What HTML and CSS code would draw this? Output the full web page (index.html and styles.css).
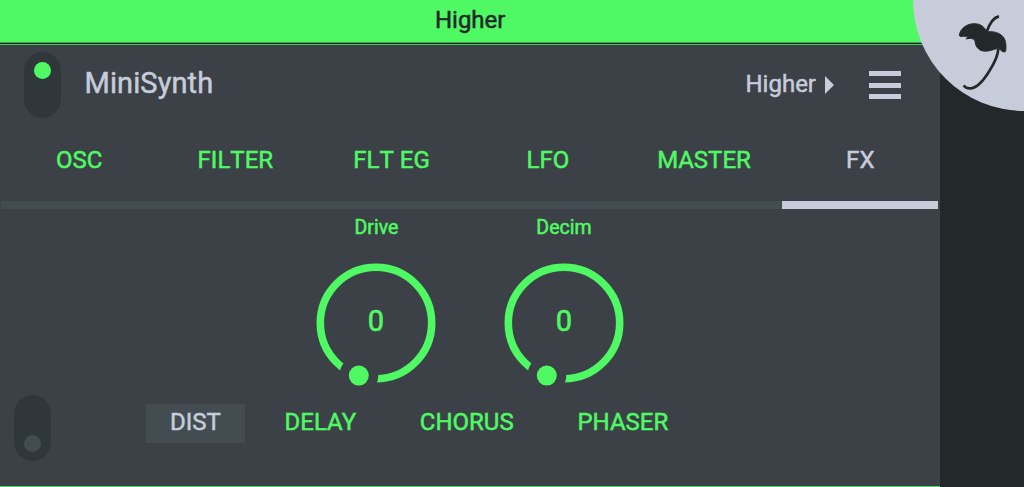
FILE: index.html
```
<!DOCTYPE html>
<html lang="en">
<head>
    <meta charset="UTF-8">
    <meta name="viewport" content="width=device-width, initial-scale=1.0">
    <title>MiniSynth</title>
    <link rel="stylesheet" href="styles.css">
</head>
<body>
    <div class="synth">
        <div class="title-bar">Higher</div>
        <div class="panel">
            <div class="header">
                <div class="toggle on"><span class="led"></span></div>
                <h1>MiniSynth</h1>
                <div class="preset">Higher <span class="arrow"></span></div>
                <div class="menu"><span></span><span></span><span></span></div>
            </div>
            <div class="tabs">
                <div class="tab">OSC</div>
                <div class="tab">FILTER</div>
                <div class="tab">FLT EG</div>
                <div class="tab">LFO</div>
                <div class="tab">MASTER</div>
                <div class="tab active">FX</div>
            </div>
            <div class="knobs">
                <div class="knob">
                    <div class="knob-label">Drive</div>
                    <svg class="dial" width="120" height="124" viewBox="0 0 120 124">
                        <circle class="ring" cx="60" cy="60" r="55.7"/>
                        <circle class="gap" cx="42.8" cy="112.6" r="19.5"/>
                        <circle class="dot" cx="42.8" cy="112.6" r="10"/>
                        <text x="60" y="68">0</text>
                    </svg>
                </div>
                <div class="knob">
                    <div class="knob-label">Decim</div>
                    <svg class="dial" width="120" height="124" viewBox="0 0 120 124">
                        <circle class="ring" cx="60" cy="60" r="55.7"/>
                        <circle class="gap" cx="42.8" cy="112.6" r="19.5"/>
                        <circle class="dot" cx="42.8" cy="112.6" r="10"/>
                        <text x="60" y="68">0</text>
                    </svg>
                </div>
            </div>
            <div class="footer">
                <div class="toggle"><span class="led"></span></div>
                <div class="effects">
                    <div class="effect active">DIST</div>
                    <div class="effect">DELAY</div>
                    <div class="effect">CHORUS</div>
                    <div class="effect">PHASER</div>
                </div>
            </div>
        </div>
    </div>
    <!-- Corner logo -->
    <div class="corner">
        <svg width="111" height="111" viewBox="39 0 333 333">
            <path class="stem" d="M297 49C281 52 268 72 260 96"/>
            <path class="canopy" d="M178 106C181 84 202 71 223 71C242 71 256 82 259 96C274 93 293 96 305 106C318 117 319 136 317 154C313 157 306 156 303 151C297 144 288 146 280 149C265 154 247 156 237 148C228 141 226 132 225 122C220 115 211 113 198 117L205 109C197 110 190 108 186 109C182 110 178 109 178 106Z"/>
            <path class="stem" d="M295 146C294 165 283 190 268 213C251 241 232 263 213 265C203 266 196 264 191 256"/>
        </svg>
    </div>
</body>
</html>
```

FILE: styles.css
```
* {
    box-sizing: border-box;
}
body {
    margin: 0;
    height: 487px;
    overflow: hidden;
    background-color: #23282b;
    color: #4ff964;
    font-family: Roboto, "Liberation Sans", sans-serif;
    font-size: 24px;
    -webkit-text-stroke: 0.5px;
}
.synth {
    width: 940.4px;
    height: 487px;
    display: flex;
    flex-direction: column;
}
.title-bar {
    height: 43px;
    border-bottom: 1px solid #38a34a;
    background-color: #4ff964;
    color: #23282b;
    line-height: 40px;
    text-align: center;
}
.panel {
    flex: 1;
    margin-top: 1px;
    display: flex;
    flex-direction: column;
    border-top: 1px solid #40c452;
    border-bottom: 1px solid #40d856;
    background-color: #3c4047;
}
.header {
    height: 80px;
    padding: 7px 39.4px 0 24px;
    display: flex;
    align-items: flex-start;
    color: #c6ccda;
}
.toggle {
    width: 37px;
    height: 66px;
    padding: 10px 10px 9px;
    display: flex;
    align-items: flex-end;
    justify-content: center;
    border-radius: 19px;
    background-color: #30373a;
}
.toggle.on {
    align-items: flex-start;
}
.led {
    width: 17px;
    height: 17px;
    border-radius: 50%;
    background-color: #434c51;
}
.toggle.on .led {
    background-color: #4ff964;
}
h1 {
    margin: 0 auto 0 23.5px;
    font-size: 29px;
    font-weight: 400;
    line-height: 62px;
    letter-spacing: 0.1px;
}
.preset {
    display: flex;
    align-items: center;
    line-height: 64px;
}
.arrow {
    margin: 1px 0 0 9px;
    border-top: 9px solid transparent;
    border-bottom: 9px solid transparent;
    border-left: 9px solid #c6ccda;
}
.menu {
    width: 32px;
    height: 28px;
    margin: 19px 0 0 35px;
    display: flex;
    flex-direction: column;
    justify-content: space-between;
}
.menu span {
    height: 5px;
    background-color: #c6ccda;
}
.tabs {
    height: 84px;
    padding: 0 2px 0 1px;
    display: grid;
    grid-template-columns: repeat(6, 1fr);
}
.tab {
    border-bottom: 8px solid #434c51;
    line-height: 70px;
    text-align: center;
    font-kerning: none;
}
.tab.active {
    border-color: #c6ccda;
    color: #c6ccda;
}
.knobs {
    height: 181px;
    display: flex;
    justify-content: center;
    gap: 67.5px;
}
.knob {
    width: 120px;
    display: flex;
    flex-direction: column;
    align-items: center;
}
.knob-label {
    height: 54px;
    font-size: 19.5px;
    line-height: 38px;
}
.ring {
    fill: none;
    stroke: #4ff964;
    stroke-width: 7.6;
}
.gap {
    fill: #3c4047;
}
.dot {
    fill: #4ff964;
}
.dial text {
    fill: #4ff964;
    stroke: #4ff964;
    stroke-width: 0.6;
    font-size: 29px;
    text-anchor: middle;
}
.footer {
    padding: 5px 0 0 14px;
    display: flex;
}
.effects {
    margin: 9px 0 0 94.5px;
    display: flex;
    align-items: flex-start;
    gap: 15px;
}
.effect {
    height: 39px;
    padding: 0 24.4px;
    line-height: 36px;
}
.effect.active {
    background-color: #434c51;
    color: #c6ccda;
}
.corner {
    position: absolute;
    top: 0;
    right: 0;
    width: 111px;
    height: 111px;
    border-bottom-left-radius: 111px;
    background-color: #c6ccda;
}
.corner svg {
    display: block;
}
.stem {
    fill: none;
    stroke: #23282b;
    stroke-width: 8;
}
.canopy {
    fill: #23282b;
    stroke: #23282b;
    stroke-width: 3;
}
```
